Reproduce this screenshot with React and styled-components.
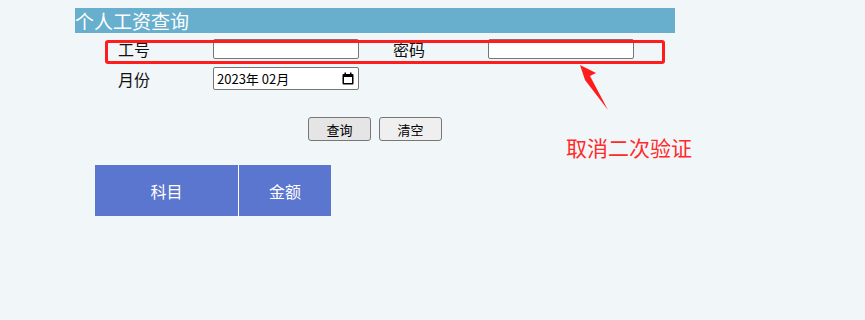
import styled, { createGlobalStyle } from "styled-components";

const GlobalStyle = createGlobalStyle`
  body {
    margin: 0;
    background: #f1f6f9;
    font-family: "Noto Sans CJK SC", "Noto Sans", sans-serif;
  }
`;

const Page = styled.div`
  position: relative;
  height: 320px;
  padding: 8px 0 0 75px;
  box-sizing: border-box;
`;

const Header = styled.div`
  width: 600px;
  height: 25px;
  line-height: 25px;
  background: #67afcd;
  color: #fff;
  font-size: 19px;
`;

const FormGrid = styled.div`
  display: grid;
  grid-template-columns: 95px 180px 95px 180px;
  row-gap: 8px;
  align-items: center;
  margin: 6px 0 0 43px;
`;

const Label = styled.div`
  font-size: 16px;
  line-height: 20px;
  color: #111;
`;

const Field = styled.div`
  display: flex;
`;

const TextInput = styled.input`
  display: block;
  width: 146px;
  height: 20px;
  box-sizing: border-box;
  border: 1px solid #767676;
  border-radius: 2px;
  background: #fff;
  padding: 1px 2px;
  font-size: 13px;
`;

const MonthBox = styled.div`
  width: 146px;
  height: 23px;
  box-sizing: border-box;
  border: 1px solid #767676;
  border-radius: 2px;
  background: #fff;
  display: flex;
  align-items: center;
  justify-content: space-between;
  padding: 0 4px 0 3px;
  font-size: 13px;
  color: #000;
`;

const Buttons = styled.div`
  width: 600px;
  display: flex;
  justify-content: center;
  gap: 8px;
  margin-top: 27px;
`;

const Button = styled.button`
  width: 63px;
  height: 24px;
  border: 1px solid #767676;
  border-radius: 3px;
  background: ${(p) => (p.$active ? "#e5e5e5" : "#efefef")};
  font-family: inherit;
  font-size: 13px;
  color: #000;
  padding: 0;
`;

const Table = styled.div`
  display: flex;
  margin: 24px 0 0 20px;
`;

const HeadCell = styled.div`
  width: ${(p) => p.$w}px;
  height: 51px;
  background: #5b76cf;
  color: #fff;
  font-size: 16px;
  display: flex;
  align-items: center;
  justify-content: center;
  & + & {
    border-left: 1px solid #fff;
  }
`;

const Highlight = styled.div`
  position: absolute;
  left: 105px;
  top: 40px;
  width: 560px;
  height: 24px;
  box-sizing: border-box;
  border: 3px solid #ff1c1c;
  border-radius: 3px;
`;

const Arrow = styled.svg`
  position: absolute;
  left: 575px;
  top: 62px;
`;

const Note = styled.div`
  position: absolute;
  left: 566px;
  top: 137px;
  font-size: 21px;
  line-height: 21px;
  color: #ff2a2a;
`;

const CalendarIcon = () => (
  <svg width="12" height="13" viewBox="0 0 12 13">
    <rect x="0.5" y="2" width="11" height="10.5" rx="1" fill="#000" />
    <rect x="2" y="5" width="8" height="6" fill="#fff" />
    <rect x="2.5" y="0.5" width="1.5" height="2.5" fill="#000" />
    <rect x="8" y="0.5" width="1.5" height="2.5" fill="#000" />
  </svg>
);

export default function App() {
  return (
    <>
      <GlobalStyle />
      <Page>
        <Header>个人工资查询</Header>
        <FormGrid>
          <Label>工号</Label>
          <Field>
            <TextInput type="text" />
          </Field>
          <Label>密码</Label>
          <Field>
            <TextInput type="password" />
          </Field>
          <Label>月份</Label>
          <Field>
            <MonthBox>
              <span>2023年 02月</span>
              <CalendarIcon />
            </MonthBox>
          </Field>
        </FormGrid>
        <Buttons>
          <Button $active>查询</Button>
          <Button>清空</Button>
        </Buttons>
        <Table>
          <HeadCell $w={143}>科目</HeadCell>
          <HeadCell $w={92}>金额</HeadCell>
        </Table>

        <Highlight />
        <Arrow width="40" height="52" viewBox="0 0 40 52">
          <polygon points="5,3 21,11 15,14 33,48 10,18" fill="#ff1c1c" />
        </Arrow>
        <Note>取消二次验证</Note>
      </Page>
    </>
  );
}
